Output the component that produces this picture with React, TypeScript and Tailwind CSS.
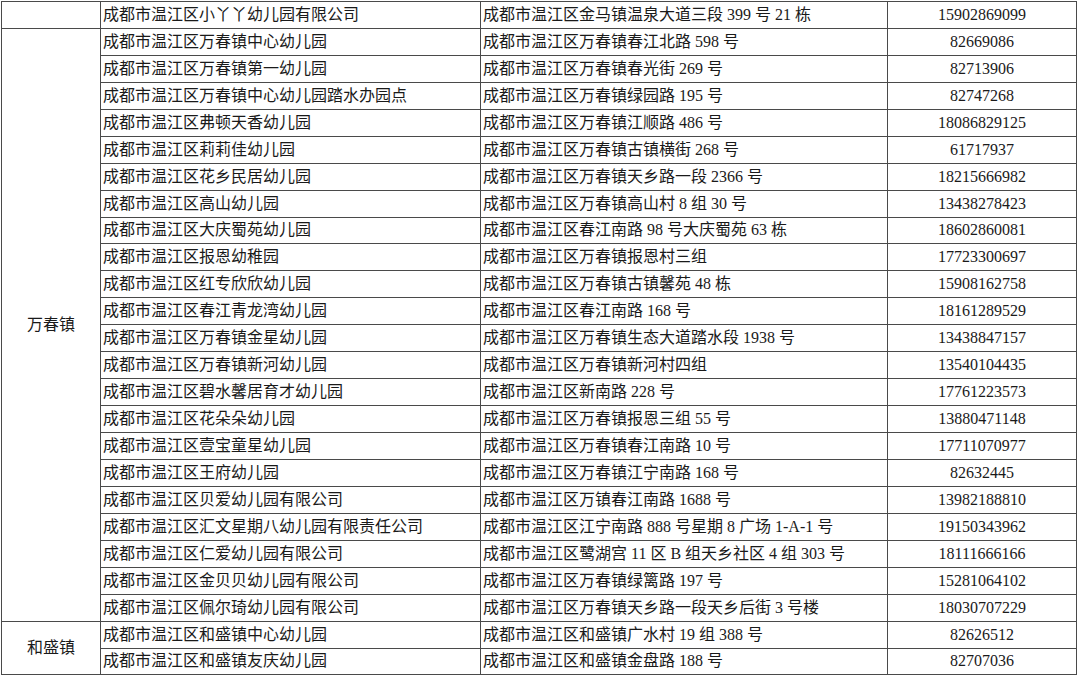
import React from 'react';

type Row = { name: string; address: string; phone: string };

// rows of the kindergarten list, grouped by town
const GROUPS: { town: string; rows: Row[] }[] = [
  {
    town: '',
    rows: [
      { name: '成都市温江区小丫丫幼儿园有限公司', address: '成都市温江区金马镇温泉大道三段 399 号 21 栋', phone: '15902869099' },
    ],
  },
  {
    town: '万春镇',
    rows: [
      { name: '成都市温江区万春镇中心幼儿园', address: '成都市温江区万春镇春江北路 598 号', phone: '82669086' },
      { name: '成都市温江区万春镇第一幼儿园', address: '成都市温江区万春镇春光街 269 号', phone: '82713906' },
      { name: '成都市温江区万春镇中心幼儿园踏水办园点', address: '成都市温江区万春镇绿园路 195 号', phone: '82747268' },
      { name: '成都市温江区弗顿天香幼儿园', address: '成都市温江区万春镇江顺路 486 号', phone: '18086829125' },
      { name: '成都市温江区莉莉佳幼儿园', address: '成都市温江区万春镇古镇横街 268 号', phone: '61717937' },
      { name: '成都市温江区花乡民居幼儿园', address: '成都市温江区万春镇天乡路一段 2366 号', phone: '18215666982' },
      { name: '成都市温江区高山幼儿园', address: '成都市温江区万春镇高山村 8 组 30 号', phone: '13438278423' },
      { name: '成都市温江区大庆蜀苑幼儿园', address: '成都市温江区春江南路 98 号大庆蜀苑 63 栋', phone: '18602860081' },
      { name: '成都市温江区报恩幼稚园', address: '成都市温江区万春镇报恩村三组', phone: '17723300697' },
      { name: '成都市温江区红专欣欣幼儿园', address: '成都市温江区万春镇古镇馨苑 48 栋', phone: '15908162758' },
      { name: '成都市温江区春江青龙湾幼儿园', address: '成都市温江区春江南路 168 号', phone: '18161289529' },
      { name: '成都市温江区万春镇金星幼儿园', address: '成都市温江区万春镇生态大道踏水段 1938 号', phone: '13438847157' },
      { name: '成都市温江区万春镇新河幼儿园', address: '成都市温江区万春镇新河村四组', phone: '13540104435' },
      { name: '成都市温江区碧水馨居育才幼儿园', address: '成都市温江区新南路 228 号', phone: '17761223573' },
      { name: '成都市温江区花朵朵幼儿园', address: '成都市温江区万春镇报恩三组 55 号', phone: '13880471148' },
      { name: '成都市温江区壹宝童星幼儿园', address: '成都市温江区万春镇春江南路 10 号', phone: '17711070977' },
      { name: '成都市温江区王府幼儿园', address: '成都市温江区万春镇江宁南路 168 号', phone: '82632445' },
      { name: '成都市温江区贝爱幼儿园有限公司', address: '成都市温江区万镇春江南路 1688 号', phone: '13982188810' },
      { name: '成都市温江区汇文星期八幼儿园有限责任公司', address: '成都市温江区江宁南路 888 号星期 8 广场 1-A-1 号', phone: '19150343962' },
      { name: '成都市温江区仁爱幼儿园有限公司', address: '成都市温江区鹭湖宫 11 区 B 组天乡社区 4 组 303 号', phone: '18111666166' },
      { name: '成都市温江区金贝贝幼儿园有限公司', address: '成都市温江区万春镇绿篱路 197 号', phone: '15281064102' },
      { name: '成都市温江区佩尔琦幼儿园有限公司', address: '成都市温江区万春镇天乡路一段天乡后街 3 号楼', phone: '18030707229' },
    ],
  },
  {
    town: '和盛镇',
    rows: [
      { name: '成都市温江区和盛镇中心幼儿园', address: '成都市温江区和盛镇广水村 19 组 388 号', phone: '82626512' },
      { name: '成都市温江区和盛镇友庆幼儿园', address: '成都市温江区和盛镇金盘路 188 号', phone: '82707036' },
    ],
  },
];

const cell = 'border border-[#4a4a4a] h-[26.95px] p-0 align-middle whitespace-nowrap';

export default function App() {
  return (
    <div
      className="w-[1080px] h-[676px] overflow-hidden bg-white text-[#1a1a1a] text-[16px] leading-none"
      style={{ fontFamily: '"Liberation Serif", "Noto Sans CJK SC", serif' }}
    >
      <table className="ml-px mt-px border-collapse table-auto">
        <tbody>
          {GROUPS.map((g, gi) =>
            g.rows.map((r, ri) => (
              <tr key={`${gi}-${ri}`}>
                {ri === 0 && (
                  <td rowSpan={g.rows.length} className={`${cell} w-[99px] min-w-[99px] text-center`}>
                    {g.town}
                  </td>
                )}
                <td className={`${cell} w-[380px] min-w-[380px] pl-[2px]`}>{r.name}</td>
                <td className={`${cell} w-[407px] min-w-[407px] pl-[2px]`}>{r.address}</td>
                <td className={`${cell} w-[189px] min-w-[189px] text-center`}>{r.phone}</td>
              </tr>
            ))
          )}
        </tbody>
      </table>
    </div>
  );
}
